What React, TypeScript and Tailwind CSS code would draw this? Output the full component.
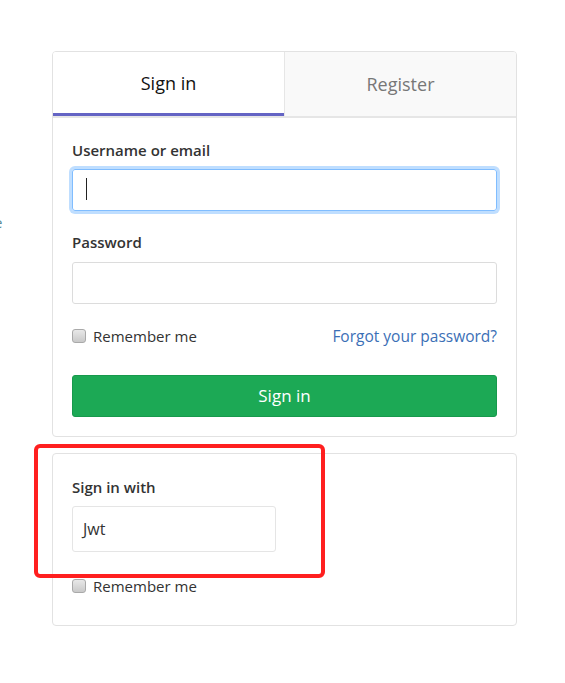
import { useState } from 'react';

const font = { fontFamily: '"Open Sans", "Noto Sans", Arial, sans-serif' };

function FakeCheckbox() {
  return (
    <span className="inline-block w-[14px] h-[14px] rounded-[3px] border border-[#a9a9a9] bg-gradient-to-b from-[#e8e8e8] to-[#c9c9c9] shrink-0" />
  );
}

function RememberRow() {
  return (
    <label className="flex items-center gap-[7px] h-[20px] text-[15px] text-[#333]">
      <FakeCheckbox />
      <span>Remember me</span>
    </label>
  );
}

export default function App() {
  const [tab, setTab] = useState<'signin' | 'register'>('signin');
  const [username, setUsername] = useState('');
  const [password, setPassword] = useState('');

  return (
    <div className="relative min-h-[683px] bg-white flex" style={font}>
      {/* clipped text from a column off to the left */}
      <div className="w-[52px] shrink-0 overflow-hidden pt-[212px]">
        <span className="block -ml-[6px] text-[15px] leading-[20px] text-[#5a8a96]">e</span>
      </div>

      <div className="w-[465px] pt-[51px]">
        <div className="border border-[#e2e2e2] rounded-[4px] overflow-hidden">
          <div className="flex border-b-2 border-[#e6e6e6]">
            <button
              onClick={() => setTab('signin')}
              className={`w-[231px] h-[64px] pt-[2px] text-[18px] ${tab === 'signin' ? 'bg-white text-[#111] font-medium border-b-[3px] border-[#6464c4]' : 'bg-[#f9f9f9] text-[#777]'}`}
            >
              Sign in
            </button>
            <button
              onClick={() => setTab('register')}
              className={`flex-1 h-[64px] text-[18px] border-l border-[#e6e6e6] ${tab === 'register' ? 'bg-white text-[#111] font-medium border-b-[3px] border-b-[#6464c4]' : 'bg-[#f9f9f9] text-[#777]'}`}
            >
              Register
            </button>
          </div>

          <form className="px-[19px] pt-[22px] pb-[19px]" onSubmit={e => e.preventDefault()}>
            <div className="text-[15px] leading-[20px] font-semibold text-[#333] mb-[9px]">Username or email</div>
            <div className="relative">
              <input
                autoFocus
                value={username}
                onChange={e => setUsername(e.target.value)}
                className="block w-full h-[42px] px-[13px] rounded-[3px] border border-[#80bdff] text-[16px] text-[#333] outline-none shadow-[0_0_0_3px_rgba(128,189,255,0.5)]"
              />
              {username === '' && (
                <span className="absolute left-[14px] top-[9px] w-[1px] h-[22px] bg-[#222] pointer-events-none" />
              )}
            </div>
            <div className="text-[15px] leading-[20px] font-semibold text-[#333] mt-[21px] mb-[10px]">Password</div>
            <input
              type="password"
              value={password}
              onChange={e => setPassword(e.target.value)}
              className="block w-full h-[42px] px-[13px] rounded-[3px] border border-[#dcdcdc] text-[16px] outline-none"
            />
            <div className="flex items-center justify-between mt-[22px]">
              <RememberRow />
              <a href="#" className="text-[15.5px] leading-[20px] text-[#3b6fb6]">Forgot your password?</a>
            </div>
            <button
              type="submit"
              className="mt-[29px] w-full h-[42px] rounded-[3px] bg-[#1ca955] border border-[#17994c] text-white text-[17px]"
            >
              Sign in
            </button>
          </form>
        </div>

        <div className="mt-[16px] border border-[#e2e2e2] rounded-[4px] px-[19px] pt-[23px] pb-[29px]">
          <div className="text-[15px] leading-[20px] font-semibold text-[#333] mb-[9px]">Sign in with</div>
          <div className="w-[204px] h-[46px] flex items-center px-[10px] rounded-[3px] border border-[#e5e5e5] text-[16px] text-[#333]">
            Jwt
          </div>
          <div className="mt-[24px]">
            <RememberRow />
          </div>
        </div>
      </div>

      {/* annotation overlay */}
      <div className="absolute left-[34px] top-[444px] w-[291px] h-[134px] border-4 border-[#ff1f1f] rounded-[6px] pointer-events-none" />
    </div>
  );
}
